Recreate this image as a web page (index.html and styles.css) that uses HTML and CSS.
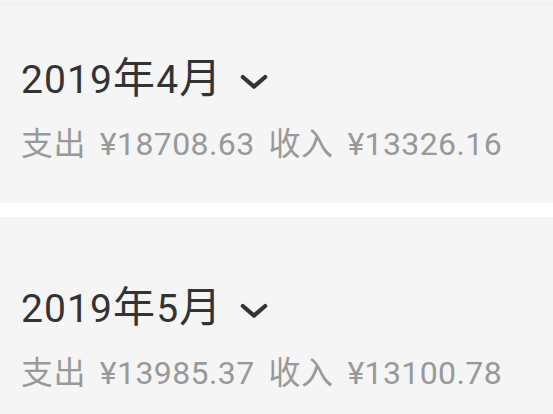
FILE: index.html
```html
<!DOCTYPE html>
<html lang="zh-CN">
<head>
<meta charset="utf-8">
<link rel="stylesheet" href="styles.css">
</head>
<body>
<div class="top-shade"></div>
<div class="list">
  <section class="month">
    <div class="title"><span>2019<span class="cjk">年</span>4<span class="cjk">月</span></span><svg class="chev" viewBox="0 0 28 16" width="28" height="16"><path d="M2.8 3 L14 12.6 L25.2 3" fill="none" stroke="#333" stroke-width="4.2" stroke-linecap="round" stroke-linejoin="round"/></svg></div>
    <div class="sum"><span>支出</span><span>¥18708.63</span><span>收入</span><span>¥13326.16</span></div>
  </section>
  <section class="month">
    <div class="title"><span>2019<span class="cjk">年</span>5<span class="cjk">月</span></span><svg class="chev" viewBox="0 0 28 16" width="28" height="16"><path d="M2.8 3 L14 12.6 L25.2 3" fill="none" stroke="#333" stroke-width="4.2" stroke-linecap="round" stroke-linejoin="round"/></svg></div>
    <div class="sum"><span>支出</span><span>¥13985.37</span><span>收入</span><span>¥13100.78</span></div>
  </section>
</div>
</body>
</html>
```

FILE: styles.css
```css
html, body {
  margin: 0;
  padding: 0;
  background: #ffffff;
  overflow: hidden;
}
body {
  font-family: Roboto, "Noto Sans CJK SC", sans-serif;
  width: 553px;
  height: 414px;
}
.top-shade {
  position: fixed;
  left: 0;
  top: 0;
  width: 100%;
  height: 11px;
  background: linear-gradient(to bottom, #f6f6f6 0px, #efefef 3px, #f3f3f3 8px, rgba(245,245,245,0) 11px);
  pointer-events: none;
  z-index: 2;
}
.list {
  margin-top: -12px;
  display: flex;
  flex-direction: column;
  gap: 14px;
}
.month {
  background: #f5f5f5;
  height: 215px;
  box-sizing: border-box;
  padding: 69px 0 0 21px;
}
.title {
  font-size: 39px;
  line-height: 47px;
  color: #333333;
  display: flex;
  align-items: center;
  white-space: nowrap;
  letter-spacing: 1.1px;
}
.cjk {
  font-family: "Noto Sans CJK SC", sans-serif;
  font-size: 42px;
  line-height: 0;
}
.chev {
  margin-left: 18px;
  margin-top: 2px;
}
.sum {
  margin-top: 20px;
  font-size: 32px;
  line-height: 40px;
  color: #999999;
  display: flex;
  gap: 14px;
  white-space: nowrap;
  letter-spacing: 0.4px;
}
```
